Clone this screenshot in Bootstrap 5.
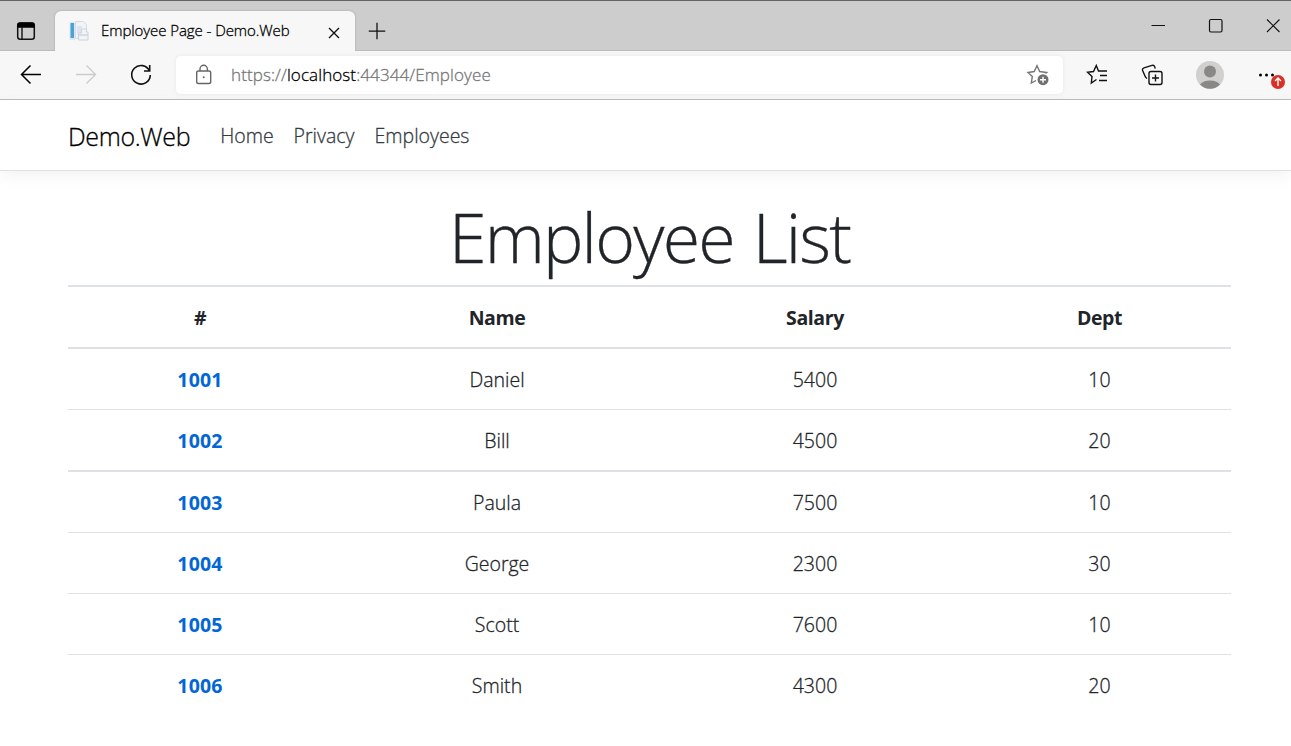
<!DOCTYPE html>
<html lang="en">
<head>
<meta charset="utf-8">
<title>Employee Page - Demo.Web</title>
<link href="https://cdn.jsdelivr.net/npm/bootstrap@5.3.0/dist/css/bootstrap.min.css" rel="stylesheet">
<style>
body{font-family:"Open Sans","Noto Sans",sans-serif;font-size:19.500px;font-weight:300;-webkit-text-stroke:.3px;line-height:30px;height:746px;overflow:hidden;color:#212529}
svg{display:block;flex:none;fill:none;stroke:#111;stroke-width:1.4}
.tabstrip{height:51px;background:#cdcdcd;border-top:1px solid #656364;border-bottom:1px solid #bcbcbc}
.tab-actions{padding:20px 0 0 16px;width:55px}
.browser-tab{width:300px;height:40px;margin-top:10px;background:#f7f7f7;border-radius:6px 6px 0 0;box-shadow:0 0 2px #999;clip-path:inset(-3px -3px 0 -3px);font-size:15px;color:#000;padding:0 14px 0 14px}
.tab-title{margin-left:12px;white-space:nowrap;letter-spacing:-.07px;margin-top:-2px}
.toolbar{height:49px;background:#f7f7f7;border-bottom:1px solid #bdbdbd;padding-left:20px}
.address{width:887px;height:38px;background:#fff;border-radius:5px;box-shadow:0 0 4px #e8e8e8;margin-left:24px;padding:0 13px 0 19px;font-size:17px;letter-spacing:.1px;color:#767676}
.address b{font-weight:300;color:#000}
.site-nav{height:71px;border-bottom:1px solid #dee2e6;box-shadow:0 5px 15px rgba(0,0,0,.05);padding:2px 0 0 68px}
.site-nav .navbar-brand{font-size:25px;letter-spacing:-.35px;color:#000;margin-right:30px;padding:0 0 0 0}
.site-nav .navbar-nav{gap:20px}
.site-nav .navbar-nav .nav-link{padding:0;color:#343a40;letter-spacing:0}
.page{margin:0 60px 0 68px}
.page h1{font-size:68px;letter-spacing:-1.8px;word-spacing:3px;font-weight:300;line-height:84px;margin:0;padding-top:24px;height:114px;white-space:nowrap}
.staff{table-layout:fixed;border-collapse:separate;border-spacing:0;margin:0;width:1163px}
.staff>:not(caption)>*>*{padding:16px 0 14px;border:0 solid #dee2e6;border-top-width:1px;line-height:30px;text-align:center;background:none;color:#212529;letter-spacing:0}
.staff>:not(caption)>*>th{-webkit-text-stroke:0;letter-spacing:-.4px}
.staff>*>tr.heavy>*{border-top-width:2px}
.staff a{color:#0366d6;text-decoration:none;letter-spacing:.2px}
.t{display:inline-block;white-space:nowrap}
</style>
<script src="https://cdn.jsdelivr.net/npm/bootstrap@5.3.0/dist/js/bootstrap.bundle.min.js"></script>
</head>
<body>
<header>
<div class="tabstrip d-flex">
  <div class="tab-actions"><svg width="20" height="20" viewBox="0 0 20 20"><rect x="1.7" y="2.3" width="16.6" height="16" rx="2.5" stroke-width="1.5"/><path d="M2 3.5Q2 2 4 2h12q2 0 2 1.500V6H2z" fill="#000" stroke="#000"/><path d="M6 6v12"/></svg></div>
  <div class="browser-tab d-flex align-items-center">
    <svg width="20" height="20" viewBox="0 0 20 20" stroke="none"><path d="M.5 1h6v18h-6z" fill="#dce9f3" stroke="none"/><path d="M1.500 2h3.500v15H1.500z" fill="#4ba3d4" stroke="none"/><path d="M6.500 1.500V.5h8l3 3v14h-11z" fill="#f1f3f7" stroke="#d5dae3" stroke-width="1"/><path d="M8 5h5v8H8z" fill="#dde4ef" stroke="none"/><path d="M12.500 8h5v3h1.500v8h-9.500v-7h3z" fill="#f2f4f8" stroke="#ccd2dd" stroke-width="1"/><path d="M10 14h9" stroke="#ccd2dd"/></svg>
    <span class="tab-title">Employee Page - Demo.Web</span>
    <svg class="ms-auto mt-1" width="14" height="14" viewBox="0 0 14 14"><path d="M2 2l10 10M12 2L2 12"/></svg>
  </div>
  <svg class="mt-3 pt-1" style="margin-left:12px" width="20" height="26" viewBox="0 -1.500 20 24"><path d="M1 9.500h18M10 .5v18"/></svg>
  <div class="ms-auto d-flex wincontrols" style="padding:17px 10px 0 0;gap:42px">
    <svg width="16" height="16" viewBox="0 0 16 16"><path d="M2.500 7.500h13.500" stroke-width="1"/></svg>
    <svg width="16" height="16" viewBox="0 0 16 16"><rect x="2.500" y="1.500" width="12.500" height="12.500" rx="1.500" stroke-width="1.200"/></svg>
    <svg width="16" height="16" viewBox="0 0 16 16"><path d="M2 1.500l12.500 12.500M14.500 1.500L2 14" stroke-width="1.100"/></svg>
  </div>
</div>
<div class="toolbar d-flex align-items-center">
  <svg width="22" height="22" viewBox="0 0 22 22"><path d="M21 10.500H1.500M10.500 1.500L1.500 10.500l9 9" stroke="#000" stroke-width="1.500"/></svg>
  <svg style="margin-left:33px" width="22" height="22" viewBox="0 0 22 22"><path d="M1 10.500h19.500M11.500 1.500l9 9-9 9" stroke="#ccc"/></svg>
  <svg style="margin-left:33px" width="22" height="24" viewBox="0 0 22 24"><path d="M19.500 8A9.300 9.300 0 1 0 20.300 12M19.700 2v6h-5.700" stroke-width="1.600"/></svg>
  <div class="address d-flex align-items-center">
    <svg width="18" height="22" viewBox="0 0 18 22" style="stroke:#666"><rect x="1.700" y="7" width="14" height="12.500" rx="1.800"/><path d="M5 7V5a3.700 3.700 0 0 1 7.400 0v2"/><circle cx="8.700" cy="13.300" r="1" fill="#666" stroke="none"/></svg>
    <span class="t url" style="margin-left:18px">https://<b>localhost</b>:44344/Employee</span>
    <svg class="ms-auto" width="24" height="24" viewBox="-1 -1 24 24" style="stroke:#767676"><path d="M9 16.500L4.300 19l1-6.500L1 8.500l6.200-1L10 1.700l2.700 5.800 7 1-1.200 1"/><circle cx="16" cy="15.700" r="5.500" fill="#707070" stroke="none"/><path d="M13 15.700h6M16 12.700v6" stroke="#fff"/></svg>
  </div>
  <svg style="margin-left:23px" width="23" height="22" viewBox="0 0 23 22"><path d="M10.500 15.500l-5.200 3.500 .7-6.500L1.500 8.300l6-.8L10.300 1.500 12.500 7h8.500M14 11.500h7M13 16.500h8"/></svg>
  <svg style="margin-left:32px" width="23" height="22" viewBox="0 0 23 22"><rect x="8" y="7.500" width="13" height="13" rx="2"/><path d="M14.500 10.500v7M11 14h7M6 14.500Q4.500 13.500 4 12L1.600 6.500Q1 4.500 3 3.800L11 1.400q2-.6 2.700 1.300l.5 2"/></svg>
  <svg style="margin-left:32px" width="28" height="28" viewBox="0 0 28 28" stroke="none"><circle cx="14" cy="14" r="14" fill="#d2d0ce" stroke="none"/><circle cx="14" cy="10.500" r="6" fill="#8a8886" stroke="none"/><path d="M4 23.500a11.500 8 0 0 1 20 0A14 14 0 0 1 4 23.500" fill="#8a8886" stroke="none"/></svg>
  <svg style="margin-left:33px" width="30" height="28" viewBox="0 0 30 28"><g fill="#000" stroke="none"><circle cx="3.500" cy="14" r="1.500"/><circle cx="9.500" cy="14" r="1.500"/><circle cx="15.500" cy="14" r="1.500"/></g><circle cx="21" cy="21" r="7" fill="#d93025" stroke="none"/><path d="M21 25v-8M18 20l3-3 3 3" stroke="#fff"/></svg>
</div>
</header>
<nav class="site-nav navbar navbar-expand navbar-light bg-white d-flex justify-content-start align-items-center">
  <a class="navbar-brand" href="#"><span class="t brand">Demo.Web</span></a>
  <div class="navbar-nav"><a class="nav-link" href="#"><span class="t">Home</span></a><a class="nav-link" href="#"><span class="t">Privacy</span></a><a class="nav-link" href="#"><span class="t">Employees</span></a></div>
</nav>
<main class="page">
  <h1 class="text-center"><span class="t">Employee List</span></h1>
  <table class="table staff">
    <colgroup><col style="width:264px"><col style="width:330px"><col style="width:306px"><col style="width:263px"></colgroup>
    <thead><tr class="heavy"><th>#</th><th>Name</th><th>Salary</th><th>Dept</th></tr></thead>
    <tbody>
      <tr class="heavy"><th><a href="#">1001</a></th><td>Daniel</td><td>5400</td><td>10</td></tr>
      <tr><th><a href="#">1002</a></th><td>Bill</td><td>4500</td><td>20</td></tr>
      <tr class="heavy"><th><a href="#">1003</a></th><td>Paula</td><td>7500</td><td>10</td></tr>
      <tr><th><a href="#">1004</a></th><td>George</td><td>2300</td><td>30</td></tr>
      <tr><th><a href="#">1005</a></th><td>Scott</td><td>7600</td><td>10</td></tr>
      <tr><th><a href="#">1006</a></th><td>Smith</td><td>4300</td><td>20</td></tr>
    </tbody>
  </table>
</main>
</body>
</html>
